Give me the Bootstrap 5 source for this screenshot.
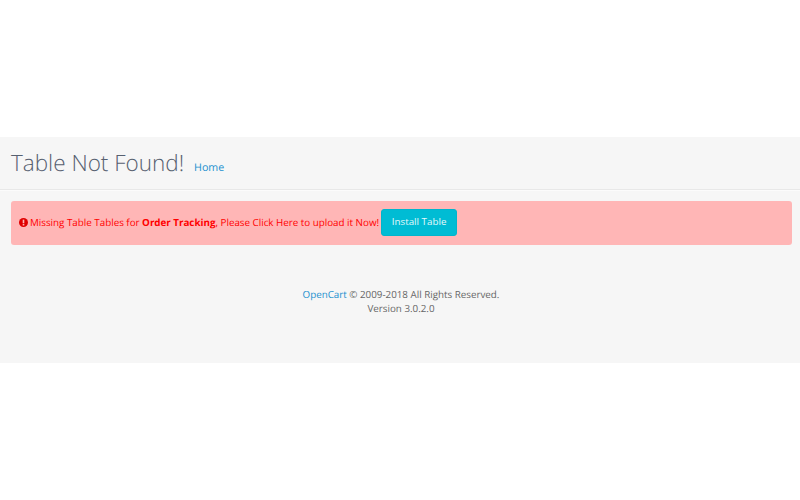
<!DOCTYPE html>
<html lang="en"><head><meta charset="utf-8"><title>Table Not Found</title>
<link href="https://cdn.jsdelivr.net/npm/bootstrap@5.3.0/dist/css/bootstrap.min.css" rel="stylesheet">
<style>
body{background:#fff;font-family:"Open Sans",sans-serif;font-size:9.8px;color:#666;height:500px;overflow:hidden;text-rendering:geometricPrecision}
.oc-stage{background:#f6f6f6;margin-top:137px;height:226px}
.oc-head{height:53px;padding:0 11px;border-bottom:1px solid #e8e8e8;box-shadow:0 1px 0 #fbfbfb}
.oc-title{font-size:22.5px;font-weight:300;color:#566070;line-height:1;margin:0}
.oc-crumb{font-size:10.7px;color:#1e91cf;text-decoration:none;margin-left:10px;padding-top:11px}
.oc-alert{margin:11px 8px 0 11px;height:44px;padding:0 8px;background:#ffb6b6;border-radius:3px;color:#f00;font-size:9.8px;gap:2px}
.oc-alert strong{font-weight:700}
.oc-btn{background:#00bcd4;color:#e6f9fb;border:1px solid #00b5cc;font-size:9.8px;border-radius:3px;width:76px;height:27px;padding:0 0 0 0;margin-top:-1px}
.oc-btn:hover{background:#00acc1;color:#fff}
.oc-icon{width:9px;height:9px;flex:none;margin-top:-1px}
.oc-foot{margin-top:43px;padding-left:2px;font-size:9.8px;line-height:14px;color:#666}
.oc-foot a{color:#1e91cf;text-decoration:none}
</style></head><body>
<div class="oc-stage">
<div class="oc-head d-flex align-items-center"><h1 class="oc-title">Table Not Found!</h1><a class="oc-crumb" href="#">Home</a></div>
<div class="oc-alert d-flex align-items-center" role="alert">
<svg class="oc-icon" viewBox="0 0 10 10" aria-hidden="true"><circle cx="5" cy="5" r="5" fill="#e00000"/><rect x="4.1" y="1.8" width="1.8" height="4" fill="#ffb6b6"/><rect x="4.1" y="6.6" width="1.8" height="1.7" fill="#ffb6b6"/></svg>
<span>Missing Table Tables for <strong>Order Tracking</strong>, Please Click Here to upload it Now!</span>
<button type="button" class="btn oc-btn">Install Table</button>
</div>
<div class="oc-foot text-center"><a href="#">OpenCart</a> © 2009-2018 All Rights Reserved.<br>Version 3.0.2.0</div>
</div>
<script src="https://cdn.jsdelivr.net/npm/bootstrap@5.3.0/dist/js/bootstrap.bundle.min.js"></script>
</body></html>
